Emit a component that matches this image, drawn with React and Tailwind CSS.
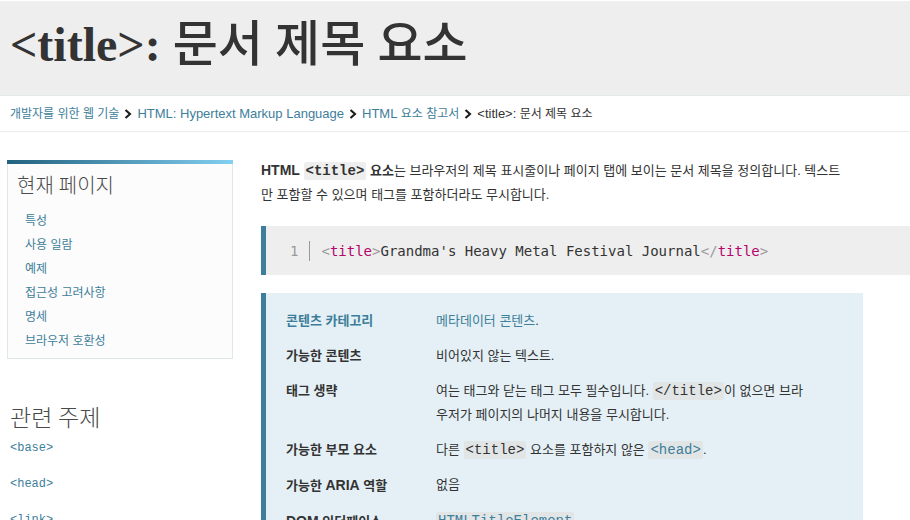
import React from "react";

const tocItems = ["특성", "사용 일람", "예제", "접근성 고려사항", "명세", "브라우저 호환성"];

const relatedTopics = ["<base>", "<head>", "<link>"];

const link = "text-[#3d7e9a]";
const mono = "font-['Liberation_Mono','Noto_Sans_CJK_KR',monospace]";
const codeMono = "font-['DejaVu_Sans_Mono','Noto_Sans_CJK_KR',monospace]";
const serif = "font-['Liberation_Serif','Noto_Sans_CJK_KR',serif]";

function Chevron() {
  return (
    <svg viewBox="0 0 8 10" className="mx-[5px] h-[10px] w-2 shrink-0" aria-hidden="true">
      <path d="M1.5 1 L6 5 L1.5 9" fill="none" stroke="#1b1b1b" strokeWidth="2.1" />
    </svg>
  );
}

function Code({ children }) {
  return <code className={`${mono} rounded-xs bg-[#eeeeee] px-[2px] py-px text-[14px]`}>{children}</code>;
}

function TableCode({ children }) {
  return <code className={`${mono} rounded-xs bg-[#e2e5e6] px-[2px] py-px text-[14px]`}>{children}</code>;
}

function Row({ label, children }) {
  return (
    <tr>
      <th scope="row" className="w-[150px] pb-[11px] text-left align-top font-bold">
        {label}
      </th>
      <td className="pr-8 pb-[11px] align-top">{children}</td>
    </tr>
  );
}

function Crumbs() {
  return (
    <nav aria-label="breadcrumb" className="border-b border-[#eceeee]">
      <ol className="flex h-[35px] items-center px-[10px] text-[12px] whitespace-nowrap">
        <li>
          <a href="#web" className={link}>개발자를 위한 웹 기술</a>
        </li>
        <li className="flex items-center">
          <Chevron />
          <a href="#html" className={`${link} text-[13px]`}>HTML: Hypertext Markup Language</a>
        </li>
        <li className="flex items-center">
          <Chevron />
          <a href="#element" className={link}>
            <span className="text-[13px]">HTML</span> 요소 참고서
          </a>
        </li>
        <li className="flex items-center">
          <Chevron />
          <span>
            <span className="text-[13px]">&lt;title&gt;:</span> 문서 제목 요소
          </span>
        </li>
      </ol>
    </nav>
  );
}

function Sidebar() {
  return (
    <aside className="w-[226px] shrink-0">
      <section className="border border-[#dfe7e8] bg-[#fcfcfc] pb-[5px]">
        <div className="-mx-px -mt-px h-1 bg-linear-to-r from-[#21627f] to-[#83d0f2]" />
        <h2 className={`${serif} px-[9px] pt-2 pb-[9px] text-[20px] leading-7 font-light text-[#4a4a4a]`}>현재 페이지</h2>
        <ul className="px-[17px] text-[12px] leading-6">
          {tocItems.map((item) => (
            <li key={item}>
              <a href={"#" + item} className={link}>{item}</a>
            </li>
          ))}
        </ul>
      </section>
      <section className="px-[3px] pt-11">
        <h2 className={`${serif} pb-px text-[23px] leading-8 font-light text-[#4a4a4a]`}>관련 주제</h2>
        <ul className={`${mono} flex flex-col gap-3 text-[12px] leading-6`}>
          {relatedTopics.map((topic) => (
            <li key={topic}>
              <a href={"#" + topic} className={link}>{topic}</a>
            </li>
          ))}
        </ul>
      </section>
    </aside>
  );
}

export default function App() {
  return (
    <div className="h-screen overflow-hidden bg-white font-['Liberation_Sans','Noto_Sans_CJK_KR',sans-serif] text-[13px] leading-6 text-[#333333]">
      <header className="mt-px border-b border-[#e4e9e9] bg-[#eeeeee] px-[10px] pt-4 pb-[22px]">
        <h1 className={`${serif} text-[48px] leading-14 font-bold whitespace-nowrap`}>
          &lt;title&gt;: <span className="text-[49px] font-medium">문서 제목 요소</span>
        </h1>
      </header>
      <Crumbs />
      <div className="flex gap-7 pt-7 pl-[7px]">
        <Sidebar />
        <main className="min-w-0 flex-1">
          <p className="-mt-0.5 mr-[60px]">
            <strong>
              <span className="text-[14px]">HTML</span> <Code>&lt;title&gt;</Code> 요소
            </strong>
            는 브라우저의 제목 표시줄이나 페이지 탭에 보이는 문서 제목을 정의합니다. 텍스트만 포함할 수 있으며 태그를 포함하더라도 무시합니다.
          </p>
          <pre className={`${codeMono} mt-[19px] flex h-[49px] items-center border-l-5 border-[#3d7e9a] bg-[#eeeeee] pl-6 text-[14px]`}>
            <span className="mr-[11px] border-r border-[#999999] pr-[11px] leading-5 text-[#999999]">1</span>
            <code className={codeMono}>
              <span className="text-[#999999]">&lt;</span>
              <span className="text-[#b5076b]">title</span>
              <span className="text-[#999999]">&gt;</span>
              Grandma's Heavy Metal Festival Journal
              <span className="text-[#999999]">&lt;/</span>
              <span className="text-[#b5076b]">title</span>
              <span className="text-[#999999]">&gt;</span>
            </code>
          </pre>
          <div className="mt-[18px] mr-[47px] border-l-5 border-[#3d7e9a] bg-[#e4f0f5] px-5 pt-4 pb-2">
            <table className="w-full table-fixed border-collapse">
              <tbody>
                <Row label={<a href="#categories" className={link}>콘텐츠 카테고리</a>}>
                  <a href="#metadata" className={link}>메타데이터 콘텐츠</a>.
                </Row>
                <Row label="가능한 콘텐츠">비어있지 않는 텍스트.</Row>
                <Row label="태그 생략">
                  여는 태그와 닫는 태그 모두 필수입니다. <TableCode>&lt;/title&gt;</TableCode>이 없으면 브라우저가 페이지의 나머지 내용을 무시합니다.
                </Row>
                <Row label="가능한 부모 요소">
                  다른 <TableCode>&lt;title&gt;</TableCode> 요소를 포함하지 않은{" "}
                  <a href="#head" className={link}><TableCode>&lt;head&gt;</TableCode></a>.
                </Row>
                <Row label={<>가능한 <span className="text-[14px]">ARIA</span> 역할</>}>없음</Row>
                <Row label={<><span className="text-[14px]">DOM</span> 인터페이스</>}>
                  <a href="#interface" className={link}><TableCode>HTMLTitleElement</TableCode></a>
                </Row>
              </tbody>
            </table>
          </div>
        </main>
      </div>
    </div>
  );
}
